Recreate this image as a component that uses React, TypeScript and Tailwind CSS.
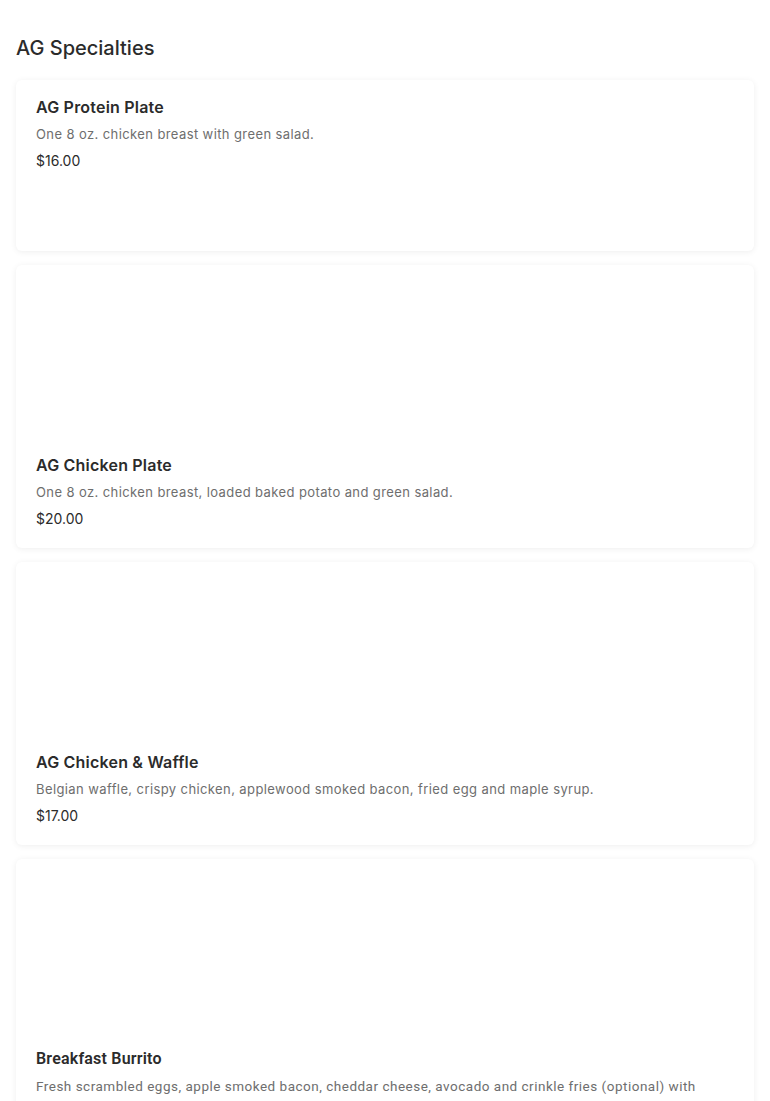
import React from 'react'

interface Item {
  name: string
  description: string
  price: string
  image?: boolean
  narrow?: boolean
}

const items: Item[] = [
  {
    name: 'AG Protein Plate',
    description: 'One 8 oz. chicken breast with green salad.',
    price: '$16.00',
  },
  {
    name: 'AG Chicken Plate',
    description: 'One 8 oz. chicken breast, loaded baked potato and green salad.',
    price: '$20.00',
    image: true,
  },
  {
    name: 'AG Chicken & Waffle',
    description: 'Belgian waffle, crispy chicken, applewood smoked bacon, fried egg and maple syrup.',
    price: '$17.00',
    image: true,
  },
  {
    name: 'Breakfast Burrito',
    description:
      'Fresh scrambled eggs, apple smoked bacon, cheddar cheese, avocado and crinkle fries (optional) with salsa on the side.',
    price: '$15.00',
    image: true,
    narrow: true,
  },
]

function MenuCard({ item }: { item: Item }) {
  return (
    <div className="bg-white rounded-md shadow-[0_1px_6px_rgba(0,0,0,0.07)] min-h-[171px] flex flex-col">
      {item.image && <div className="h-[173px] shrink-0" />}
      <div
        className={`px-5 pt-4 ${item.image ? 'pb-[19px]' : 'pb-5'} ${
          item.narrow ? "font-['Roboto',sans-serif]" : ''
        }`}
      >
        <div className="text-[16px] font-semibold text-[#2b2b2b] leading-[22px] tracking-[0.2px]">
          {item.name}
        </div>
        <div
          className={`mt-[6px] text-[#6e6e6e] leading-[20px] ${
            item.narrow ? 'text-[13.5px] tracking-[0.5px]' : 'text-[13px] tracking-[0.4px]'
          }`}
        >
          {item.description}
        </div>
        <div className="mt-[7px] text-[14px] text-[#2b2b2b] leading-[20px]">{item.price}</div>
      </div>
    </div>
  )
}

export default function App() {
  return (
    <div className="min-h-screen bg-white px-4 pt-[34px] font-['Inter','Lato',sans-serif]">
      <h2 className="text-[20px] font-medium text-[#2b2b2b] leading-[28px] mb-[18px]">AG Specialties</h2>
      <div className="flex flex-col gap-[14px]">
        {items.map((item) => (
          <MenuCard key={item.name} item={item} />
        ))}
      </div>
    </div>
  )
}
